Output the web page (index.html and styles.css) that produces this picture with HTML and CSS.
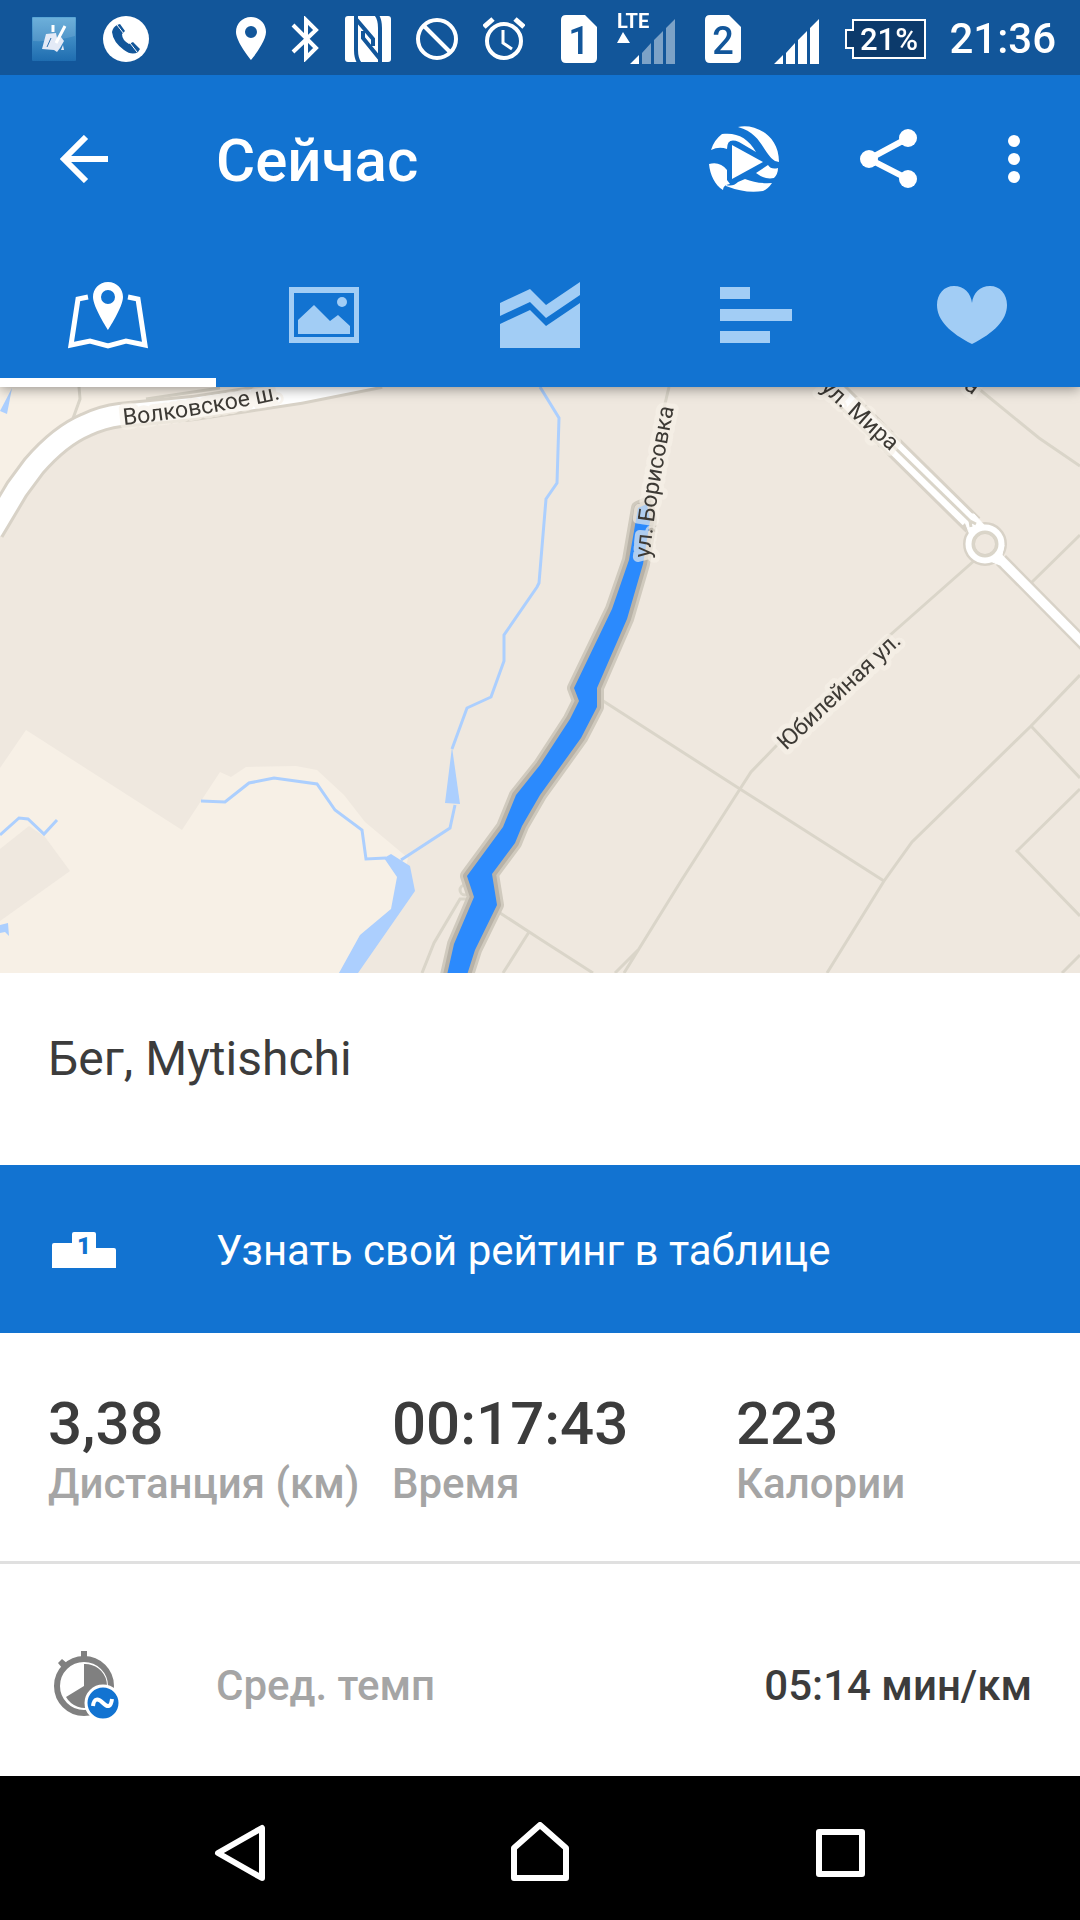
FILE: index.html
```html
<!DOCTYPE html>
<html lang="ru">
<head>
    <meta charset="UTF-8">
    <meta name="viewport" content="width=device-width, initial-scale=1.0">
    <title>Сейчас</title>
    <link rel="stylesheet" href="styles.css">
</head>
<body>
    <!-- Status bar -->
    <div class="status-bar">
        <div class="status-left">
            <svg width="44" height="44" viewBox="32 17 44 44">
                <defs>
                    <linearGradient id="appBg" x1="0" y1="0" x2="0" y2="1">
                        <stop offset="0" stop-color="#5aa6d6"/>
                        <stop offset="1" stop-color="#1f6db0"/>
                    </linearGradient>
                </defs>
                <rect x="32" y="17" width="44" height="44" rx="1" fill="url(#appBg)"/>
                <path d="M33 18H75V36Q54 42 33 41Z" fill="#fff" opacity=".12"/>
                <path d="M46 34L56 33L57 38L61 37L64 41L60 48L57 52L54 50L42 49Z" fill="#e4eaf6"/>
                <path d="M53 25V32M65 26L56 43" stroke="#fff" stroke-width="3"/>
                <path d="M47 47L51 38" stroke="#2f70ae" stroke-width="1"/>
                <path d="M61 50L63 45L64 50Z" fill="#e4eaf6"/>
            </svg>
            <svg width="46" height="46" viewBox="103 15 46 46">
                <circle cx="126" cy="38" r="23" fill="#fff"/>
                <path d="M117 24L120 23L125 30L122 33Q122 39 129 43L133 41L140 48L138 51Q132 55 124 49Q113 41 112 31Q113 26 117 24Z" fill="#12569a"/>
                <path d="M117 24L124 33M130 42L137 51" stroke="#fff" stroke-width="1"/>
            </svg>
        </div>
        <div class="status-right">
            <svg width="32" height="46" viewBox="236 15 32 46">
                <path fill="#fff" fill-rule="evenodd" d="M252 16C243 16 237 23 237 31C237 41 252 59 252 59C252 59 267 41 267 31C267 23 261 16 252 16ZM252 25A6 6 0 1 1 252 37A6 6 0 1 1 252 25Z"/>
            </svg>
            <svg width="28" height="46" viewBox="292 15 28 46">
                <path d="M294 24L317 47L307 57V19L317 29L294 51" fill="none" stroke="#fff" stroke-width="4"/>
            </svg>
            <svg width="48" height="48" viewBox="344 13 48 48">
                <rect x="346" y="14" width="46" height="46" rx="3" fill="#fff"/>
                <g fill="none" stroke="#12569a" stroke-width="4">
                    <path d="M357 13V48Q357 57 361 62"/>
                    <path d="M357 17L374 37V44"/>
                    <path d="M381 61V26Q381 17 377 12"/>
                    <path d="M381 57L364 36V29"/>
                </g>
            </svg>
            <svg width="44" height="46" viewBox="416 15 44 46">
                <circle cx="438" cy="38" r="19" fill="none" stroke="#fff" stroke-width="4"/>
                <path d="M425 25L451 51" stroke="#fff" stroke-width="4"/>
            </svg>
            <svg width="42" height="46" viewBox="482 15 42 46">
                <circle cx="503" cy="40" r="17" fill="none" stroke="#fff" stroke-width="4"/>
                <path d="M502 29V42L511 48" fill="none" stroke="#fff" stroke-width="3"/>
                <path d="M483 26L492 18M523 26L514 18" stroke="#fff" stroke-width="5"/>
            </svg>
            <div class="sims">
                <div class="sim">
                    <svg width="36" height="48" viewBox="0 0 36 48">
                        <path d="M5 0H24L36 12V43Q36 48 31 48H5Q0 48 0 43V5Q0 0 5 0Z" fill="#fff"/>
                        <text class="sim-number" x="18" y="39">1</text>
                    </svg>
                    <svg width="58" height="66" viewBox="617 3 58 66">
                        <text class="lte" x="617" y="25">LTE</text>
                        <path d="M617 40L623 29L630 40ZM630 61L639 52V61Z" fill="#fff"/>
                        <path d="M642 61V50L651 40V61ZM654 61V37L663 28V61ZM666 61V25L675 16V61Z" fill="#fff" opacity=".45"/>
                    </svg>
                </div>
                <div class="sim">
                    <svg width="36" height="48" viewBox="0 0 36 48">
                        <path d="M5 0H24L36 12V43Q36 48 31 48H5Q0 48 0 43V5Q0 0 5 0Z" fill="#fff"/>
                        <text class="sim-number" x="18" y="39">2</text>
                    </svg>
                    <svg width="58" height="66" viewBox="617 3 58 66">
                        <path d="M630 61L639 52V61ZM642 61V50L651 40V61ZM654 61V37L663 28V61ZM666 61V25L675 16V61Z" fill="#fff"/>
                    </svg>
                </div>
            </div>
            <svg width="82" height="42" viewBox="845 16 82 42">
                <path d="M853 18H925V56H853V46H846V28H853Z" fill="#0c3a6b" stroke="#fff" stroke-width="2"/>
                <text class="battery" x="889" y="48">21%</text>
            </svg>
            <span class="clock">21:36</span>
        </div>
    </div>

    <!-- App bar -->
    <header class="app-bar">
        <div class="toolbar">
            <button class="back-btn" aria-label="Назад">
                <svg width="48" height="48" viewBox="0 0 48 48">
                    <path d="M26 2L4 24L26 46M4 24H48" fill="none" stroke="#fff" stroke-width="6"/>
                </svg>
            </button>
            <h1>Сейчас</h1>
            <button class="action-btn" aria-label="Воспроизвести">
                <svg width="72" height="72" viewBox="708 123 72 72" fill="#fff">
                    <path d="M738 127C752 123 779 133 779 162L775 161C763 154 762 133 738 127Z"/>
                    <path d="M711 150Q714 140 722 134C737 132 748 138 756 152L739 142Q727 137 727 149Q719 146 711 150Z"/>
                    <path d="M709 164Q720 161 727 170V180L730 184Q723 185 723 190C715 185 710 175 709 164Z"/>
                    <path d="M726 185Q733 187 738 182L745 179Q757 184 772 183Q768 189 763 191Q746 194 726 186Z"/>
                    <path d="M756 173L768 165Q771 170 778 168Q778 174 774 178Q765 180 756 173Z"/>
                    <path d="M732 145L763 162L732 179Z"/>
                </svg>
            </button>
            <button class="action-btn" aria-label="Поделиться">
                <svg width="60" height="62" viewBox="857 128 60 62">
                    <path d="M907 138L868 159L907 179" fill="none" stroke="#fff" stroke-width="6"/>
                    <circle cx="907" cy="138" r="9" fill="#fff"/>
                    <circle cx="868" cy="159" r="9" fill="#fff"/>
                    <circle cx="907" cy="179" r="9" fill="#fff"/>
                </svg>
            </button>
            <button class="action-btn menu-btn" aria-label="Ещё">
                <svg width="12" height="48" viewBox="0 0 12 48" fill="#fff">
                    <circle cx="6" cy="6" r="6"/>
                    <circle cx="6" cy="24" r="6"/>
                    <circle cx="6" cy="42" r="6"/>
                </svg>
            </button>
        </div>
        <div class="tabs" role="tablist">
            <button class="tab active" role="tab" aria-selected="true" aria-label="Карта">
                <svg width="80" height="72" viewBox="68 278 80 72">
                    <path fill="currentColor" fill-rule="evenodd" d="M108 281C99 281 93 288 93 296C93 306 108 329 108 329C108 329 123 306 123 296C123 288 117 281 108 281ZM108 289A7 7 0 1 1 108 303A7 7 0 1 1 108 289Z"/>
                    <path d="M88 296L78 298L71 344L90 340L108 345L126 340L145 344L138 298L128 296" fill="none" stroke="currentColor" stroke-width="5"/>
                </svg>
            </button>
            <button class="tab" role="tab" aria-selected="false" aria-label="Фото">
                <svg width="72" height="72" viewBox="288 279 72 72" fill="currentColor">
                    <path fill-rule="evenodd" d="M289 287H359V343H289ZM294 293V337H354V293Z"/>
                    <circle cx="342" cy="302" r="5"/>
                    <path d="M298 334V320L314 305L330 321L338 315L350 326V334Z"/>
                </svg>
            </button>
            <button class="tab" role="tab" aria-selected="false" aria-label="Графики">
                <svg width="80" height="72" viewBox="500 279 80 72" fill="currentColor">
                    <path d="M500 303L530 289L546 305L580 282V295L546 318L530 302L500 316Z"/>
                    <path d="M500 324L530 310L546 326L580 303V348H500Z"/>
                </svg>
            </button>
            <button class="tab" role="tab" aria-selected="false" aria-label="Круги">
                <svg width="72" height="72" viewBox="0 0 72 72" fill="currentColor">
                    <path d="M0 8H30V20H0ZM0 30H72V42H0ZM0 52H50V64H0Z"/>
                </svg>
            </button>
            <button class="tab" role="tab" aria-selected="false" aria-label="Пульс">
                <svg width="72" height="72" viewBox="936 279 72 72" fill="currentColor">
                    <path d="M972 344C950 333 937 320 937 305C937 294 944 286 954 286C964 286 971 293 972 303C973 293 980 286 990 286C1000 286 1007 294 1007 305C1007 320 994 333 972 344Z"/>
                </svg>
            </button>
        </div>
    </header>

    <main>
        <!-- Route map -->
        <div class="map">
            <svg viewBox="0 387 1080 586" role="img" aria-label="Карта маршрута">
                <defs>
                    <path id="volkovskoe" d="M124 425Q200 417 290 397"/>
                    <path id="borisovka" d="M650 558Q654 506 675 403"/>
                    <path id="mira" d="M820 389L900 460"/>
                    <path id="yubileynaya" d="M786 751L909 636"/>
                    <path id="track" d="M638 508L629 560L612 609L574 688L579 701L570 719L540 765L516 795L503 827L467 876L474 897L454 944L447 975H467L475 950L497 905L492 874L515 843L522 826L540 795L581 738L597 707V688L627 619L643 564L650 521L647 504Z"/>
                    <g id="labels">
                        <text><textPath href="#volkovskoe">Волковское ш.</textPath></text>
                        <text><textPath href="#borisovka">ул. Борисовка</textPath></text>
                        <text><textPath href="#mira">ул. Мира</textPath></text>
                        <text><textPath href="#yubileynaya">Юбилейная ул.</textPath></text>
                        <text transform="translate(963 388) rotate(36)">а</text>
                    </g>
                </defs>
                <rect class="land" y="387" width="1080" height="586"/>
                <g class="park">
                    <path d="M0 387H372L275 391L120 415L62 439L0 518Z"/>
                    <path d="M26 730L182 830L220 772L231 777L246 767L296 766L317 770L344 795L365 822L408 858L397 909L339 973H0V768Z"/>
                </g>
                <path class="land" d="M0 849L29 826L45 837L70 871L0 921Z"/>
                <g class="water">
                    <path d="M12 388L0 411L7 414Z"/>
                    <path d="M0 925L8 923L9 936L5 932L0 933Z"/>
                    <path d="M384 858L391 854L410 866L415 891L358 973H339L360 935L391 909L397 877Z"/>
                    <path d="M452 747L445 803L460 804Z"/>
                </g>
                <g class="stream">
                    <path d="M0 835L19 818L28 819L44 834L57 820"/>
                    <path d="M201 801L225 802L249 783L274 778L317 784L335 810L362 830L366 859L386 858"/>
                    <path d="M401 860L450 828L455 805"/>
                    <path d="M452 749L467 708L491 697L504 661V635L537 587L539 583L546 499L557 483L559 418L540 387"/>
                </g>
                <g class="street">
                    <path d="M79 387L80 399L71 424M146 399L220 388"/>
                    <path d="M669 387L664 408"/>
                    <path d="M597 697L740 789L884 881"/>
                    <path d="M975 560L889 636L778 744L751 772L740 789L681 881L624 973M638 950L615 973"/>
                    <path d="M497 911L540 939L593 973M529 932L503 973"/>
                    <path d="M827 973L884 881L912 842L1031 726L1080 675M1031 726L1080 778"/>
                    <path d="M1080 789L1017 851L1080 916M1062 973L1080 955"/>
                    <path d="M1031 583L1080 535M979 389L1039 438L1080 466"/>
                    <path d="M422 973L434 943L460 899H474"/>
                    <circle cx="465" cy="890" r="5"/>
                </g>

                <!-- Main roads: casing first, then the white fill -->
                <g class="road-casing">
                    <path stroke-width="26" d="M-8 531L17 489L34 466Q60 436 86 425Q103 417 120 415L193 408L300 392L380 376"/>
                    <path stroke-width="21" d="M833 387L973 525"/>
                    <path stroke-width="14" d="M1001 560L1090 650"/>
                    <circle cx="985" cy="544" r="16" stroke-width="12"/>
                </g>
                <g class="road">
                    <path stroke-width="20" d="M-8 531L17 489L34 466Q60 436 86 425Q103 417 120 415L193 408L300 392L380 376"/>
                    <path stroke-width="15" d="M833 387L968 520"/>
                    <path d="M962 514L970 535L985 526L974 514ZM1004 545L1000 565L990 561Z" fill="#fff"/>
                    <path stroke-width="9" d="M998 557L1090 650"/>
                    <circle cx="985" cy="544" r="16" stroke-width="7"/>
                </g>
                <g class="street">
                    <path d="M891 444L970 521"/>
                    <path d="M970 521L971 527M970 521L976 524"/>
                    <circle cx="985" cy="544" r="12"/>
                </g>

                <use href="#track" class="track-glow"/>
                <use href="#track" class="track-shadow"/>
                <use href="#track" class="track"/>

                <use href="#labels" class="map-label label-halo"/>
                <use href="#labels" class="map-label"/>
            </svg>
        </div>

        <h2 class="workout-title">Бег, Mytishchi</h2>

        <a class="rating" href="#">
            <svg width="64" height="36" viewBox="0 0 64 36">
                <path d="M20 11V2Q20 0 22 0H42Q44 0 44 2V16H62Q64 16 64 18V36H0V13Q0 11 2 11Z" fill="#fff"/>
                <text class="podium-number" x="32" y="22">1</text>
            </svg>
            <span>Узнать свой рейтинг в таблице</span>
        </a>

        <dl class="stats">
            <div class="stat">
                <dt>Дистанция (км)</dt>
                <dd>3,38</dd>
            </div>
            <div class="stat">
                <dt>Время</dt>
                <dd>00:17:43</dd>
            </div>
            <div class="stat">
                <dt>Калории</dt>
                <dd>223</dd>
            </div>
        </dl>

        <div class="detail-row">
            <svg width="72" height="72" viewBox="48 1649 72 72">
                <circle cx="84" cy="1686" r="27" fill="none" stroke="#808080" stroke-width="6"/>
                <path d="M81 1651H87V1658H81ZM58 1663L62 1659L68 1664L63 1669Z" fill="#808080"/>
                <path d="M84 1686V1664A22 22 0 1 1 66 1697Z" fill="#808080"/>
                <circle cx="103" cy="1703" r="17" fill="#1273d1" stroke="#fff" stroke-width="3"/>
                <path d="M93 1706C94 1698 98 1698 103 1703S111 1707 112 1699" fill="none" stroke="#fff" stroke-width="4"/>
            </svg>
            <span class="detail-name">Сред. темп</span>
            <span class="detail-value">05:14 мин/км</span>
        </div>
    </main>

    <!-- Navigation bar -->
    <nav class="nav-bar">
        <button aria-label="Назад">
            <svg width="60" height="60" viewBox="210 1822 60 60">
                <path d="M262 1828V1878L218 1853Z"/>
            </svg>
        </button>
        <button aria-label="Домой">
            <svg width="60" height="60" viewBox="510 1822 60 60">
                <path d="M514 1878V1848L540 1825L566 1848V1878Z"/>
            </svg>
        </button>
        <button aria-label="Недавние">
            <svg width="60" height="60" viewBox="810 1822 60 60">
                <path d="M819 1832H862V1874H819Z"/>
            </svg>
        </button>
    </nav>
</body>
</html>
```
FILE: styles.css
```css
:root {
    --blue: #1273d1;
    --dark-blue: #12569a;
    --light-blue: #a2cdf5;
    --text: #3c3c3c;
    --muted: #a5a5a5;
}

* {
    margin: 0;
    padding: 0;
    box-sizing: border-box;
}

body {
    display: flex;
    flex-direction: column;
    min-height: 100vh;
    background: #fff;
    color: var(--text);
    font-family: Roboto, "Noto Sans", sans-serif;
}

svg {
    display: block;
    flex-shrink: 0;
}

button {
    display: flex;
    justify-content: center;
    align-items: center;
    background: none;
    border: none;
    cursor: pointer;
}

/* Status bar */
.status-bar {
    position: relative;
    z-index: 2;
    display: flex;
    justify-content: space-between;
    align-items: center;
    height: 75px;
    padding: 2px 24px 0 32px;
    background: var(--dark-blue);
    color: #fff;
}

.status-left {
    display: flex;
    align-items: center;
    gap: 27px;
}

.status-right {
    display: flex;
    align-items: center;
    gap: 24px;
}

.sims {
    display: flex;
    gap: 30px;
    margin: 0 2px 0 12px;
}

.sim {
    display: flex;
    align-items: center;
    gap: 20px;
}

.sim-number {
    fill: var(--dark-blue);
    font-size: 38px;
    font-weight: 500;
    text-anchor: middle;
}

.lte {
    fill: #fff;
    font-size: 20px;
    font-weight: 700;
}

.battery {
    fill: #fff;
    font-size: 31px;
    font-weight: 500;
    text-anchor: middle;
}

.clock {
    margin-left: -2px;
    font-size: 42px;
    font-weight: 500;
    line-height: 48px;
}

/* App bar */
.app-bar {
    position: relative;
    z-index: 1;
    background: var(--blue);
    color: #fff;
    box-shadow: 0 2px 12px rgba(0, 0, 0, 0.4);
}

.toolbar {
    display: flex;
    align-items: center;
    height: 168px;
    padding-right: 12px;
}

.back-btn {
    width: 168px;
    height: 144px;
}

.toolbar h1 {
    flex: 1;
    padding: 4px 0 0 48px;
    font-size: 60px;
    font-weight: 500;
    line-height: 70px;
}

.action-btn {
    width: 144px;
    height: 144px;
}

.menu-btn {
    width: 108px;
}

.tabs {
    display: grid;
    grid-template-columns: repeat(5, 1fr);
}

.tab {
    height: 144px;
    border-top: 9px solid transparent;
    border-bottom: 9px solid transparent;
    color: var(--light-blue);
}

.tab.active {
    color: #fff;
    border-bottom-color: #fff;
}

/* Map */
.map svg {
    width: 100%;
    height: auto;
}

.land {
    fill: #efe8df;
}

.park {
    fill: #f7f0e6;
}

.water {
    fill: #accffe;
}

.stream {
    fill: none;
    stroke: #accffe;
    stroke-width: 3;
}

.street {
    fill: none;
    stroke: #dad5c9;
    stroke-width: 3;
}

.road-casing {
    fill: none;
    stroke: #d8d2c7;
}

.road {
    fill: none;
    stroke: #fff;
}

.track {
    fill: #2b8afd;
}

.track-glow {
    fill: none;
    stroke: #d0cabe;
    stroke-width: 14;
    stroke-linejoin: round;
}

.track-shadow {
    fill: none;
    stroke: #b8b2a7;
    stroke-width: 8;
    stroke-linejoin: round;
}

.map-label {
    fill: #3d3a35;
    font-size: 23px;
}

.label-halo {
    fill: none;
    stroke: #f7f1e8;
    stroke-width: 10;
    stroke-linejoin: round;
    opacity: 0.65;
}

/* Workout */
.workout-title {
    padding: 58px 48px 78px;
    font-size: 48px;
    font-weight: 400;
    line-height: 56px;
}

.rating {
    display: flex;
    align-items: center;
    gap: 100px;
    min-height: 168px;
    padding: 2px 48px 0 52px;
    background: var(--blue);
    color: #fff;
    font-size: 42px;
    text-decoration: none;
}

.podium-number {
    fill: var(--blue);
    font-size: 24px;
    font-weight: 900;
    text-anchor: middle;
}

.stats {
    display: grid;
    grid-template-columns: repeat(3, 1fr);
    padding: 56px 0 52px 48px;
    border-bottom: 3px solid #e0e0e0;
}

.stat {
    display: flex;
    flex-direction: column-reverse;
    white-space: nowrap;
}

.stat dt {
    color: var(--muted);
    font-size: 42px;
    font-weight: 500;
    line-height: 50px;
}

.stat dd {
    font-size: 60px;
    font-weight: 500;
    line-height: 70px;
}

.detail-row {
    display: flex;
    align-items: center;
    padding: 85px 48px 55px;
    font-size: 42px;
    font-weight: 500;
}

.detail-name {
    flex: 1;
    padding-left: 96px;
    color: var(--muted);
}

/* Navigation bar */
.nav-bar {
    display: grid;
    grid-template-columns: repeat(3, 1fr);
    height: 144px;
    margin-top: auto;
    padding: 8px 90px 0;
    background: #000;
}

.nav-bar path {
    fill: none;
    stroke: #fff;
    stroke-width: 6;
    stroke-linejoin: round;
}
```
